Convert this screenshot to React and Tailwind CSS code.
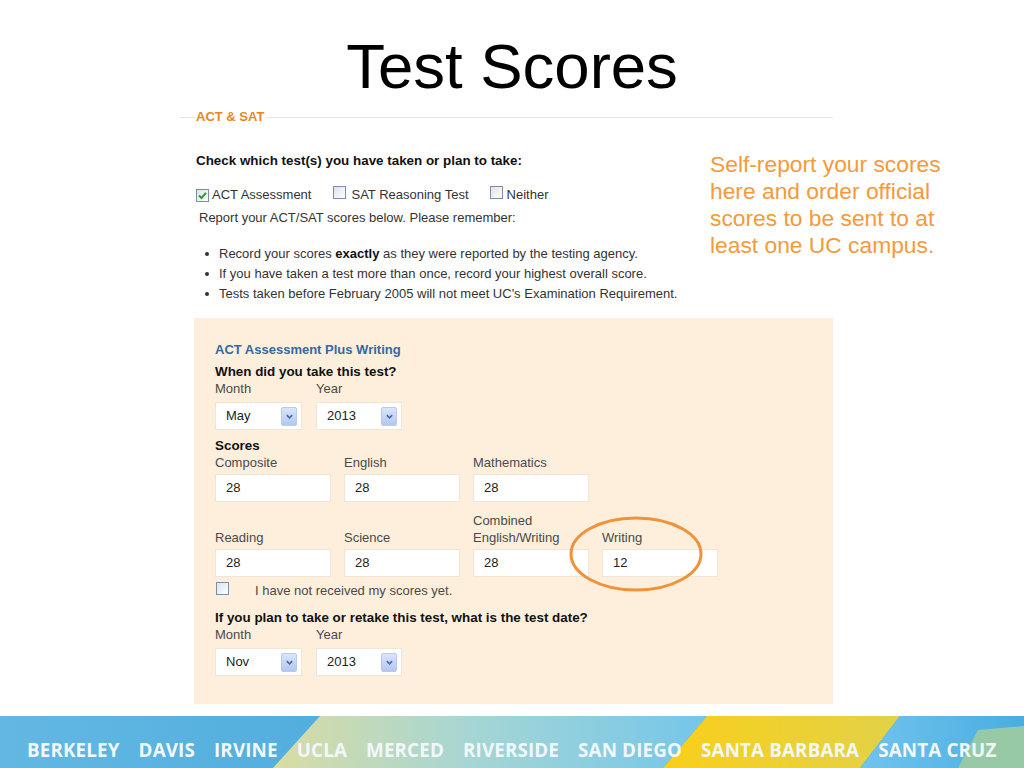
import React from 'react';

const CheckBox = ({ checked = false }) => (
  <span className="relative inline-flex w-[13px] h-[13px] shrink-0 border border-[#7d8ea6] bg-gradient-to-br from-[#dde3ea] to-white">
    {checked && (
      <svg viewBox="0 0 13 13" className="absolute -left-px -top-px w-[13px] h-[13px]">
        <path d="M3 6.5 L5.5 9 L10 3.8" fill="none" stroke="#2f9a2f" strokeWidth="2" />
      </svg>
    )}
  </span>
);

const Select = ({ value, width }) => (
  <div className={`${width} h-[28px] bg-white border border-[#efe6d8] flex items-center justify-between pl-[10px] pr-[4px] text-[13px] text-[#222]`}>
    <span>{value}</span>
    <span className="w-[16px] h-[19px] rounded-[2px] border border-[#b9c9ec] bg-gradient-to-b from-[#dbe5fb] to-[#b3c7f1] flex items-center justify-center">
      <svg viewBox="0 0 10 10" className="w-[9px] h-[9px]">
        <path d="M2 3.5 L5 6.5 L8 3.5" fill="none" stroke="#4a6aa3" strokeWidth="1.8" />
      </svg>
    </span>
  </div>
);

const ScoreInput = ({ value }) => (
  <div className="w-[116px] h-[28px] bg-white border border-[#efe6d8] flex items-center pl-[10px] text-[13px] text-[#222]">
    {value}
  </div>
);

const campuses = ['BERKELEY', 'DAVIS', 'IRVINE', 'UCLA', 'MERCED', 'RIVERSIDE', 'SAN DIEGO', 'SANTA BARBARA', 'SANTA CRUZ'];

export default function App() {
  return (
    <div className="w-[1024px] h-[768px] bg-white relative flex flex-col font-['Liberation_Sans',Arial,sans-serif] overflow-hidden">
      {/* Title */}
      <h1 className="mt-[35px] h-[62px] leading-[62px] text-[63.5px] text-black text-center">Test Scores</h1>

      {/* Form */}
      <div className="ml-[180px] w-[653px] mt-[11px] flex flex-col">
        <div className="h-[18px] flex items-center">
          <span className="w-[14px] border-t border-[#e4e4e4]" />
          <span className="px-[2px] text-[13px] font-bold text-[#e8871e]">ACT &amp; SAT</span>
          <span className="flex-1 border-t border-[#e4e4e4]" />
        </div>

        <div className="mt-[28px] ml-[16px] h-[14px] leading-[14px] text-[13.4px] font-bold text-[#111]">
          Check which test(s) you have taken or plan to take:
        </div>

        <div className="mt-[19px] ml-[16px] h-[16px] flex items-center text-[13px] text-[#333]">
          <CheckBox checked />
          <span className="ml-[3px]">ACT Assessment</span>
          <span className="ml-[22px]"><CheckBox /></span>
          <span className="ml-[5px]">SAT Reasoning Test</span>
          <span className="ml-[21px]"><CheckBox /></span>
          <span className="ml-[4px]">Neither</span>
        </div>

        <div className="mt-[8px] ml-[19px] h-[14px] leading-[14px] text-[13px] text-[#333]">
          Report your ACT/SAT scores below. Please remember:
        </div>

        <ul className="mt-[19px] ml-[25px] text-[13px] text-[#333]">
          <li className="h-[20px] flex items-center gap-[10px]">
            <span className="w-[4px] h-[4px] rounded-full bg-[#333]" />
            <span>Record your scores <b className="text-[#111]">exactly</b> as they were reported by the testing agency.</span>
          </li>
          <li className="h-[20px] flex items-center gap-[10px]">
            <span className="w-[4px] h-[4px] rounded-full bg-[#333]" />
            <span>If you have taken a test more than once, record your highest overall score.</span>
          </li>
          <li className="h-[20px] flex items-center gap-[10px]">
            <span className="w-[4px] h-[4px] rounded-full bg-[#333]" />
            <span>Tests taken before February 2005 will not meet UC's Examination Requirement.</span>
          </li>
        </ul>

        {/* ACT panel */}
        <div className="mt-[14px] ml-[14px] w-[639px] h-[386px] bg-[#fdefdc] pl-[21px] pt-[25px] flex flex-col text-[13px] text-[#4a4a4a]">
          <div className="h-[14px] leading-[14px] font-bold text-[#3468a4]">ACT Assessment Plus Writing</div>
          <div className="mt-[8px] h-[14px] leading-[14px] text-[13.4px] font-bold text-[#111]">When did you take this test?</div>
          <div className="mt-[3px] h-[14px] leading-[14px] flex">
            <span className="w-[101px]">Month</span>
            <span>Year</span>
          </div>
          <div className="mt-[6px] flex gap-[14px]">
            <Select value="May" width="w-[87px]" />
            <Select value="2013" width="w-[86px]" />
          </div>

          <div className="mt-[9px] h-[14px] leading-[14px] text-[13.4px] font-bold text-[#111]">Scores</div>
          <div className="mt-[3px] h-[14px] leading-[14px] grid grid-cols-[129px_129px_129px]">
            <span>Composite</span>
            <span>English</span>
            <span>Mathematics</span>
          </div>
          <div className="mt-[4px] grid grid-cols-[129px_129px_129px]">
            <ScoreInput value="28" />
            <ScoreInput value="28" />
            <ScoreInput value="28" />
          </div>

          <div className="mt-[10px] h-[34px] leading-[17px] grid grid-cols-[129px_129px_129px_129px] items-end">
            <span>Reading</span>
            <span>Science</span>
            <span>Combined<br />English/Writing</span>
            <span>Writing</span>
          </div>
          <div className="mt-[3px] grid grid-cols-[129px_129px_129px_129px]">
            <ScoreInput value="28" />
            <ScoreInput value="28" />
            <ScoreInput value="28" />
            <ScoreInput value="12" />
          </div>

          <div className="mt-[7px] h-[14px] flex items-center">
            <span className="ml-[1px]"><CheckBox /></span>
            <span className="ml-[26px]">I have not received my scores yet.</span>
          </div>

          <div className="mt-[13px] h-[14px] leading-[14px] text-[13.4px] font-bold text-[#111]">
            If you plan to take or retake this test, what is the test date?
          </div>
          <div className="mt-[3px] h-[14px] leading-[14px] flex">
            <span className="w-[101px]">Month</span>
            <span>Year</span>
          </div>
          <div className="mt-[6px] flex gap-[14px]">
            <Select value="Nov" width="w-[87px]" />
            <Select value="2013" width="w-[86px]" />
          </div>
        </div>
      </div>

      {/* Callout */}
      <p className="absolute left-[710px] top-[151px] w-[270px] text-[22.8px] leading-[27px] text-[#f59a3a]">
        Self-report your scores here and order official scores to be sent to at least one UC campus.
      </p>

      {/* Highlight ellipse */}
      <svg className="absolute left-[565px] top-[513px] w-[142px] h-[82px]" viewBox="0 0 142 82">
        <ellipse cx="71" cy="41" rx="65" ry="36" fill="none" stroke="#f0923a" strokeWidth="3" />
      </svg>

      {/* Campus footer */}
      <div className="mt-auto relative h-[52px] flex items-center pt-[16px]">
        <svg className="absolute inset-0 w-full h-full" viewBox="0 0 1024 52" preserveAspectRatio="none">
          <defs>
            <linearGradient id="blueL" x1="0" x2="1">
              <stop offset="0" stopColor="#63b8e3" />
              <stop offset="1" stopColor="#2b98d2" />
            </linearGradient>
            <linearGradient id="pale" x1="0" x2="1">
              <stop offset="0" stopColor="#dadca3" />
              <stop offset="0.45" stopColor="#a6d6d4" />
              <stop offset="1" stopColor="#74c6ea" />
            </linearGradient>
            <linearGradient id="yellow" x1="0" x2="1">
              <stop offset="0" stopColor="#f9cf1a" />
              <stop offset="1" stopColor="#e2d248" />
            </linearGradient>
            <linearGradient id="blueR" x1="0" x2="1">
              <stop offset="0" stopColor="#70c4ee" />
              <stop offset="1" stopColor="#49ade0" />
            </linearGradient>
          </defs>
          <rect x="0" y="0" width="1024" height="52" fill="url(#blueL)" />
          <polygon points="320,0 707,0 663,52 273,52" fill="url(#pale)" />
          <polygon points="707,0 900,0 860,52 663,52" fill="url(#yellow)" />
          <polygon points="900,0 1024,0 1024,52 860,52" fill="url(#blueR)" />
          <polygon points="978,14 1024,10 1024,52 958,52" fill="#98c9a6" />
        </svg>
        <div className="relative ml-[27px] flex gap-[19px] text-[18.8px] font-bold tracking-[0.15px] text-[#f2f7fa] font-['Open_Sans',sans-serif]">
          {campuses.map((c) => (
            <span key={c}>{c}</span>
          ))}
        </div>
      </div>
    </div>
  );
}
